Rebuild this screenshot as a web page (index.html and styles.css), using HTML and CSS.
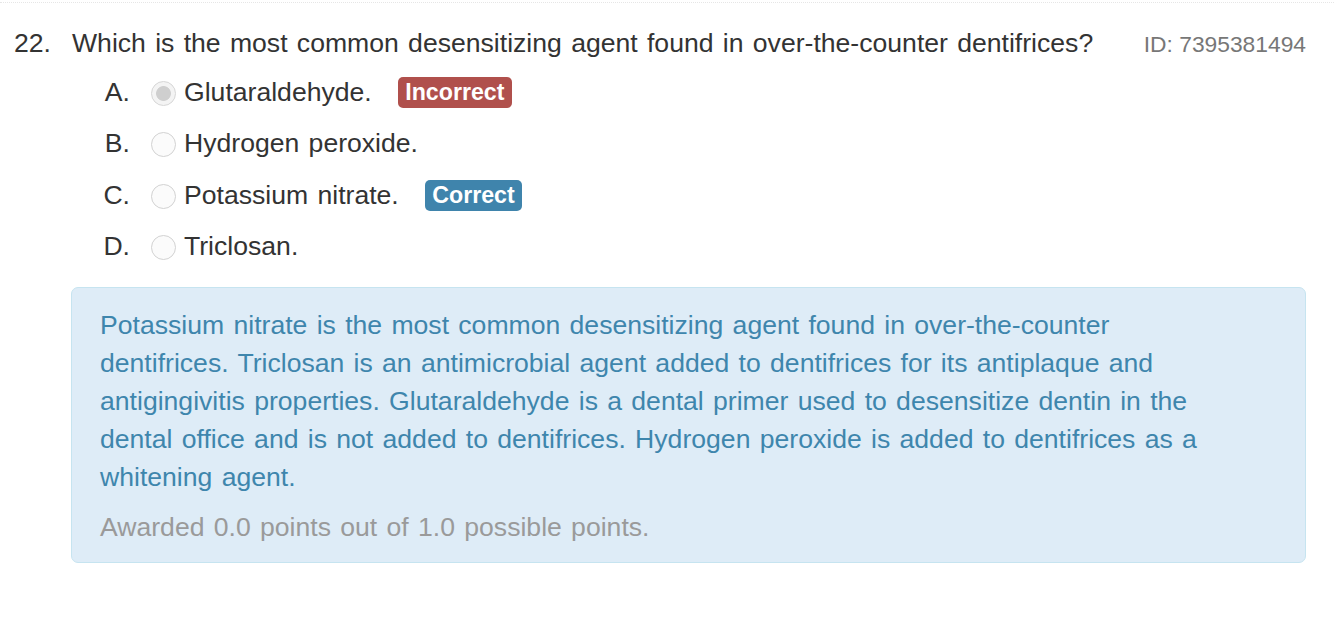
FILE: index.html
```html
<!DOCTYPE html>
<html lang="en">
<head>
<meta charset="utf-8">
<title>Question 22</title>
<link rel="stylesheet" href="styles.css">
</head>
<body>
<div class="page">
  <div class="question">
    <div class="q-head">
      <span class="q-num">22.</span>
      <span class="q-text">Which is the most common desensitizing agent found in over-the-counter dentifrices?</span>
      <span class="q-id">ID: 7395381494</span>
    </div>
    <ul class="options">
      <li class="option">
        <span class="opt-letter">A.</span>
        <span class="radio checked"></span>
        <span class="opt-text">Glutaraldehyde.</span>
        <span class="badge badge-incorrect">Incorrect</span>
      </li>
      <li class="option">
        <span class="opt-letter">B.</span>
        <span class="radio"></span>
        <span class="opt-text">Hydrogen peroxide.</span>
      </li>
      <li class="option">
        <span class="opt-letter">C.</span>
        <span class="radio"></span>
        <span class="opt-text">Potassium nitrate.</span>
        <span class="badge badge-correct">Correct</span>
      </li>
      <li class="option">
        <span class="opt-letter">D.</span>
        <span class="radio"></span>
        <span class="opt-text">Triclosan.</span>
      </li>
    </ul>
    <div class="explanation">
      <p class="exp-text">Potassium nitrate is the most common desensitizing agent found in over-the-counter dentifrices. Triclosan is an antimicrobial agent added to dentifrices for its antiplaque and antigingivitis properties. Glutaraldehyde is a dental primer used to desensitize dentin in the dental office and is not added to dentifrices. Hydrogen peroxide is added to dentifrices as a whitening agent.</p>
      <p class="exp-points">Awarded 0.0 points out of 1.0 possible points.</p>
    </div>
  </div>
</div>
</body>
</html>
```
FILE: styles.css
```css
html, body {
  margin: 0;
  padding: 0;
  background: #ffffff;
}

body {
  font-family: "Liberation Sans", Arial, Helvetica, sans-serif;
  color: #333333;
  font-size: 26.6px;
  word-spacing: 1.9px;
}

.page {
  border-top: 1px dotted #e6e6e6;
  margin-top: 2px;
  min-height: 612px;
}

.question {
  padding: 21px 28px 0 14px;
}

.q-head {
  display: flex;
  align-items: baseline;
  line-height: 38px;
}

.q-num {
  width: 58px;
  flex: none;
}

.q-text {
  flex: 1;
}

.q-id {
  font-size: 22.8px;
  color: #777777;
  flex: none;
  word-spacing: 0;
}

.options {
  list-style: none;
  margin: 4px 0 0 0;
  padding: 0;
}

.option {
  display: flex;
  align-items: center;
  height: 51.3px;
}

.opt-letter {
  width: 116px;
  text-align: right;
  flex: none;
}

.radio {
  flex: none;
  box-sizing: border-box;
  width: 25px;
  height: 25px;
  border-radius: 50%;
  border: 1px solid #d2d2d2;
  background: #fbfbfb;
  margin: 2px 8px 0 21px;
}

.radio.checked {
  background: radial-gradient(circle, #cfcfcf 0 7px, #f4f4f4 7.8px);
  border-color: #d6d6d6;
}

.opt-text {
  flex: none;
}

.badge {
  flex: none;
  margin-left: 26px;
  height: 31px;
  line-height: 31px;
  padding: 0 7.5px;
  border-radius: 5px;
  font-size: 23.2px;
  font-weight: bold;
  color: #ffffff;
}

.badge-incorrect {
  background: #b0504c;
}

.badge-correct {
  background: #3f84ac;
}

.explanation {
  margin: 15px 0 0 57px;
  background: #deecf7;
  border: 1px solid #c6e4f0;
  border-radius: 7px;
  padding: 18px 80px 16px 28px;
}

.explanation p {
  margin: 0;
  line-height: 38px;
}

.exp-text {
  color: #3e86ad;
}

.exp-points {
  color: #9a9a9a;
  margin-top: 12px !important;
}
```
